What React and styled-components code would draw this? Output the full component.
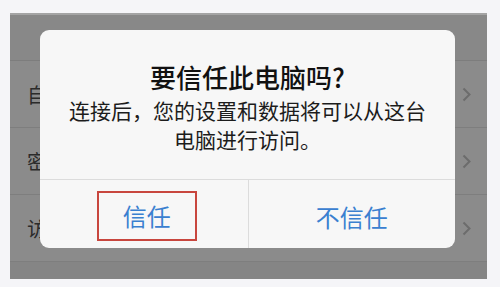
import React from "react";
import styled, { createGlobalStyle } from "styled-components";

const GlobalStyle = createGlobalStyle`
  html, body {
    margin: 0;
    padding: 0;
    background: #f5f5f8;
  }
  body {
    font-family: "Noto Sans CJK SC", "Noto Sans", sans-serif;
  }
`;

const Page = styled.div`
  width: 500px;
  height: 287px;
  padding: 13px 13px 0 10px;
  box-sizing: border-box;
`;

const Screen = styled.div`
  position: relative;
  width: 477px;
  height: 266px;
  background: #8b8b8b;
  display: flex;
  flex-direction: column;
  border-top: 2px solid #a4a4a4;
  box-sizing: border-box;
`;

const Header = styled.div`
  height: 45px;
  background: #888888;
  border-bottom: 1px solid #7d7d7d;
`;

const Row = styled.div`
  height: 66px;
  display: flex;
  align-items: center;
  justify-content: space-between;
  padding: 0 16px 0 17px;
  border-bottom: 1px solid #7e7e7e;
  color: #2b2b2b;
  font-size: 20px;
`;

const RowText = styled.span`
  width: 13px;
  overflow: hidden;
  white-space: nowrap;
`;

const Footer = styled.div`
  flex: 1;
  background: #858585;
`;

const Chevron = () => (
  <svg width="9" height="15" viewBox="0 0 9 15">
    <polyline points="1.5,1.5 7.5,7.5 1.5,13.5" fill="none" stroke="#6c6c6c" strokeWidth="2" />
  </svg>
);

const Dialog = styled.div`
  position: absolute;
  left: 30px;
  top: 15px;
  width: 415px;
  height: 218px;
  background: #f7f7f7;
  border-radius: 9px;
  display: flex;
  flex-direction: column;
  overflow: hidden;
`;

const Content = styled.div`
  height: 150px;
  box-sizing: border-box;
  padding-top: 30px;
  border-bottom: 1px solid #dcdcdc;
  text-align: center;
`;

const Title = styled.div`
  font-size: 26px;
  line-height: 34px;
  font-weight: 500;
  color: #111;
  margin-bottom: 2px;
`;

const Message = styled.div`
  font-size: 21px;
  line-height: 29px;
  color: #1c1c1c;
`;

const Buttons = styled.div`
  flex: 1;
  display: grid;
  grid-template-columns: 1fr 1fr;
`;

const Button = styled.div`
  display: flex;
  align-items: center;
  justify-content: center;
  border-left: ${(p) => (p.$divider ? "1px solid #dcdcdc" : "none")};
`;

const Label = styled.span`
  display: inline-flex;
  align-items: center;
  justify-content: center;
  width: ${(p) => (p.$marked ? "96px" : "auto")};
  height: ${(p) => (p.$marked ? "46px" : "auto")};
  margin: ${(p) => (p.$marked ? "3px 0 0 6px" : "4px 0 0 0")};
  border: ${(p) => (p.$marked ? "2px solid #c8463e" : "none")};
  font-size: 24px;
  color: #3a80d0;
`;

const rows = ["自动锁定", "密码", "访问限制"];

export default function App() {
  return (
    <>
      <GlobalStyle />
      <Page>
        <Screen>
          <Header />
          {rows.map((r) => (
            <Row key={r}>
              <RowText>{r}</RowText>
              <Chevron />
            </Row>
          ))}
          <Footer />
          <Dialog>
            <Content>
              <Title>要信任此电脑吗?</Title>
              <Message>
                连接后，您的设置和数据将可以从这台
                <br />
                电脑进行访问。
              </Message>
            </Content>
            <Buttons>
              <Button>
                <Label $marked>信任</Label>
              </Button>
              <Button $divider>
                <Label>不信任</Label>
              </Button>
            </Buttons>
          </Dialog>
        </Screen>
      </Page>
    </>
  );
}
